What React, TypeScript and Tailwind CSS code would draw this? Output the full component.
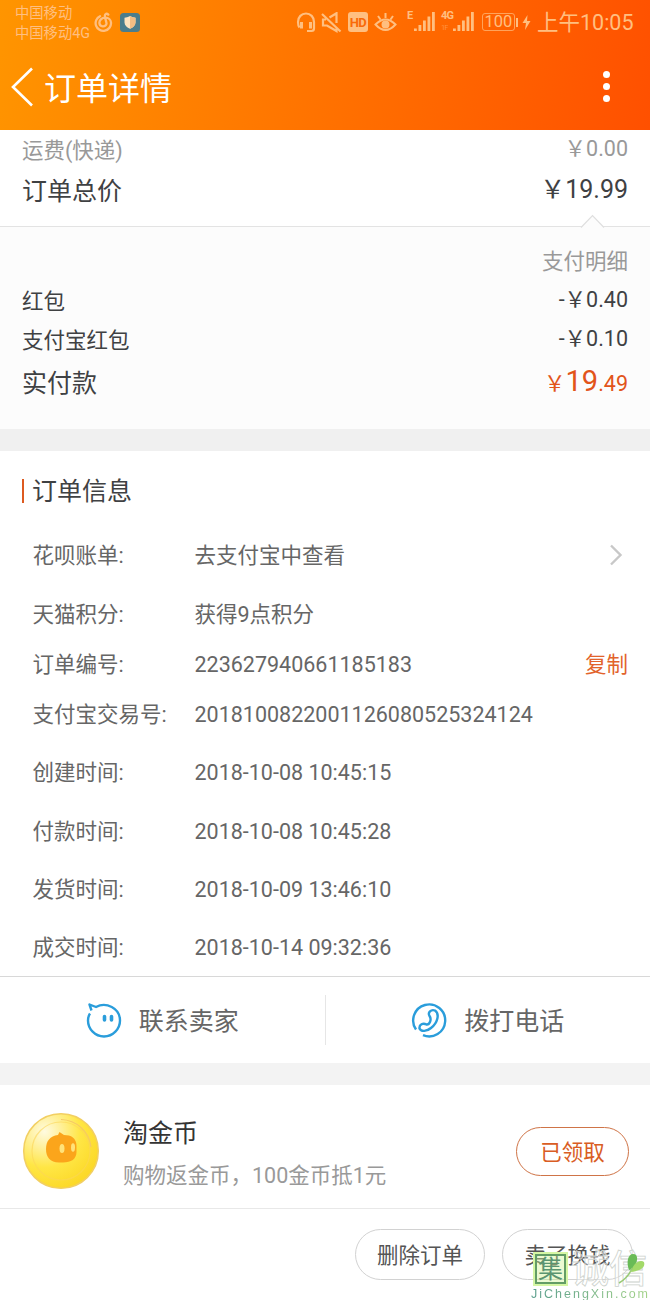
import type { ReactNode } from 'react';
import { clsx } from 'clsx';

const payments = [
  { label: '红包', amount: '-￥0.40' },
  { label: '支付宝红包', amount: '-￥0.10' },
];

type InfoRow = { label: string; value: string; height: string; action?: 'link' | 'copy' };

const infoRows: InfoRow[] = [
  { label: '花呗账单:', value: '去支付宝中查看', height: 'h-[68px]', action: 'link' },
  { label: '天猫积分:', value: '获得9点积分', height: 'h-[50px]' },
  { label: '订单编号:', value: '223627940661185183', height: 'h-[50px]', action: 'copy' },
  { label: '支付宝交易号:', value: '2018100822001126080525324124', height: 'h-[50px]' },
  { label: '创建时间:', value: '2018-10-08 10:45:15', height: 'h-[67px]' },
  { label: '付款时间:', value: '2018-10-08 10:45:28', height: 'h-[50px]' },
  { label: '发货时间:', value: '2018-10-09 13:46:10', height: 'h-[67px]' },
  { label: '成交时间:', value: '2018-10-14 09:32:36', height: 'h-[49px]' },
];

function Signal() {
  return (
    <svg width="22" height="20" viewBox="0 0 22 20" fill="currentColor">
      <rect x="0" y="16.5" width="2.8" height="2.5" />
      <rect x="4.5" y="13" width="2.8" height="6" />
      <rect x="9" y="8.5" width="2.8" height="10.5" />
      <rect x="13.500" y="4.5" width="2.8" height="14.5" />
      <rect x="18" y="0" width="2.8" height="19" />
    </svg>
  );
}

function StatusBar() {
  return (
    <div className="flex h-11 text-[#ffbf80]">
      <div className="w-[78px] pl-[15px] pt-[3px] text-[14.3px] leading-5 whitespace-nowrap">
        <div>中国移动</div>
        <div>中国移动4G</div>
      </div>
      {/* music app */}
      <svg className="ml-4 mt-3" width="20" height="21" viewBox="0 0 20 21" fill="none" stroke="currentColor" strokeWidth="2.300" strokeLinecap="round">
        <path d="M6 4.200A7.700 7.700 0 1 0 17 10.500C16.800 7.600 14.500 5.700 11.500 5.700C7.500 5.700 5.200 8.400 5.400 11.200C5.700 15 11.500 15.500 12.500 11.800C12.700 10.500 10.800 5.500 10.800 4C10.800 1.600 12.800 1.200 14.300 2.600" />
      </svg>
      {/* security app */}
      <svg className="ml-[6px] mt-3" width="20" height="21" viewBox="0 0 20 21">
        <rect y="1" width="20" height="19" rx="3.500" fill="#4b7d8c" />
        <path d="M10 4C8 5.300 6 5.500 4.500 5.700V10.500C4.500 13.500 7 15.500 10 16.800C13 15.500 15.500 13.500 15.500 10.500V5.700C14 5.500 12 5.300 10 4Z" fill="#ffe3be" />
        <path d="M10 4V16.800C13 15.500 15.500 13.500 15.500 10.500V5.700C14 5.500 12 5.300 10 4Z" fill="#f3bd83" />
      </svg>

      {/* headset */}
      <svg className="ml-[156px] mt-3" width="20" height="21" viewBox="0 0 20 21" fill="none" stroke="currentColor" strokeWidth="2.200">
        <path d="M3.500 15.500Q2 14 2 10C2 5 5.500 1.500 10 1.500S18 5 18 10V16.500Q18 19 15.500 19H11" />
        <path d="M5.500 10V16.500M14.500 10V16.500" strokeWidth="3" />
      </svg>
      {/* muted speaker */}
      <svg className="ml-[5px] mt-3" width="21" height="21" viewBox="0 0 21 21" fill="none" stroke="currentColor" strokeWidth="2.200">
        <path d="M1 2L19.500 19.500M8.500 5.500L15.500 1.200V11M5 7.500H2V13.500H6L15.500 19V16.500" />
      </svg>
      <div className="ml-[6px] mt-3 flex h-5 w-5 items-center justify-center rounded-[3px] bg-[#ffbf80] text-[13px] leading-none font-bold tracking-[-0.5px] text-[#f96a08]">
        HD
      </div>
      {/* eye comfort */}
      <svg className="ml-[6px] mt-3" width="23" height="21" viewBox="0 0 22 21" fill="none" stroke="currentColor" strokeWidth="2">
        <path d="M1 12.500Q11 2.500 21 12.500Q11 23.500 1 12.500ZM11 1V6M3.500 4L6 7.500M18.500 4L16 7.500" />
        <circle cx="11" cy="12.500" r="3" fill="currentColor" />
      </svg>
      <div className="ml-[10px] mt-[11px] flex">
        <span className="w-[7px] text-[11px] leading-[10px] font-bold">E</span>
        <span className="pt-[1px]"><Signal /></span>
      </div>
      <div className="ml-[5px] mt-[11px] flex">
        <span className="w-3 text-[11px] leading-[10px] font-bold tracking-[-0.7px]">
          4G
          <span className="block pt-1 text-[7px] leading-[6px] font-normal opacity-50">1F</span>
        </span>
        <span className="pt-[1px]"><Signal /></span>
      </div>
      <div className="ml-[7px] mt-[13px] flex h-[18px] w-[33px] items-center justify-center rounded-[3px] border border-current/70 text-[16.5px] leading-none">
        100
      </div>
      <div className="ml-[1px] mt-[18px] h-[9px] w-[2px] bg-current" />
      <svg className="ml-1 mt-[15px]" width="9" height="15" viewBox="0 0 9 15" fill="currentColor">
        <path d="M5.500 0L0.500 8H4L3 15L8.500 6H5Z" />
      </svg>
      <div className="ml-[6px] pt-[11px] text-[21.5px] leading-6 whitespace-nowrap">上午10:05</div>
    </div>
  );
}

function TitleBar() {
  return (
    <div className="flex h-[86px] items-center pl-[11px] text-white">
      <svg width="24" height="40" viewBox="0 0 24 40" fill="none" stroke="currentColor" strokeWidth="2.600">
        <path d="M21 1.500L2 20L21 38.500" />
      </svg>
      <h1 className="ml-[9px] pt-[3px] text-[32px] leading-10">订单详情</h1>
      <div className="mr-10 ml-auto flex flex-col gap-[5px] pb-[1px]">
        <span className="h-[7px] w-[7px] rounded-full bg-white" />
        <span className="h-[7px] w-[7px] rounded-full bg-white" />
        <span className="h-[7px] w-[7px] rounded-full bg-white" />
      </div>
    </div>
  );
}

function PriceRow({ label, children, className }: { label: string; children: ReactNode; className?: string }) {
  return (
    <div className={clsx('flex items-center justify-between px-[22px]', className)}>
      <span>{label}</span>
      <span className="-translate-y-[2px]">{children}</span>
    </div>
  );
}

function PillButton({ children, className }: { children: ReactNode; className: string }) {
  return (
    <button type="button" className={clsx('flex items-center justify-center rounded-full border text-[21.5px]', className)}>
      {children}
    </button>
  );
}

function Coin() {
  return (
    <svg className="-translate-y-[1px]" width="78" height="78" viewBox="0 0 78 78">
      <defs>
        <radialGradient id="coin" cx="0.28" cy="0.24" r="0.8">
          <stop offset="0" stopColor="#fffbe0" />
          <stop offset="0.28" stopColor="#fff09a" />
          <stop offset="0.6" stopColor="#ffe645" />
          <stop offset="1" stopColor="#fcd928" />
        </radialGradient>
      </defs>
      <circle cx="39" cy="39" r="37.300" fill="url(#coin)" stroke="#f2cf62" strokeWidth="1.500" />
      <circle cx="39" cy="39" r="29" fill="none" stroke="#fbd657" strokeWidth="1.200" opacity="0.600" />
      <path d="M39 7.500A31 31 0 0 1 69 35" fill="none" stroke="#f5c866" strokeWidth="1.200" />
      <path d="M37.500 20L42 23C49 23 54.500 26 54.500 34V40C54.500 47 49 50.500 41 50.500H37C28 50.500 24 45 24 37C24 29 28 24 36 23Z" fill="#fba51b" />
      <ellipse cx="40" cy="36.500" rx="2.500" ry="4.500" fill="#ffe27a" />
      <ellipse cx="51" cy="35.500" rx="2" ry="4.200" fill="#ffe27a" />
    </svg>
  );
}

function Watermark() {
  return (
    <div className="pointer-events-none absolute top-[1252px] left-[530px] h-12 w-[120px]">
      <div className="absolute top-[2px] left-[5px] flex h-[30px] w-[31px] items-center justify-center border-2 border-[#639d66] bg-[#cdf28f]/40 text-[25px] leading-none text-[#5b9571] ring-2 ring-[#d5f6a4]">
        集
      </div>
      <div className="absolute top-0 left-[41px] text-[38px] leading-[34px] font-medium whitespace-nowrap text-white/40 [-webkit-text-stroke:0.8px_#ced3ce]">
        诚信
      </div>
      <svg className="absolute top-0 left-[86px]" width="32" height="36" viewBox="0 0 32 36">
        <path d="M13 18C10 10 12 2 17 2C23 2 22 10 17 17Z" fill="#69bb56" />
        <path d="M15 20C17 11 24 7 28 10C30 16 23 19 15 20Z" fill="#a3d969" />
        <path d="M16 16Q13 25 3 31" fill="none" stroke="#99ca76" strokeWidth="1.500" />
      </svg>
      <div className="absolute top-[36px] left-[1px] bg-linear-to-r from-[#579c8a] to-[#a5d489] bg-clip-text font-['Liberation_Sans'] text-[12.5px] leading-[13px] tracking-[2px] whitespace-nowrap text-transparent">
        JiChengXin.com
      </div>
    </div>
  );
}

export default function App() {
  return (
    <div className="relative h-[1300px] w-[650px] overflow-hidden bg-white font-[Roboto,'Noto_Sans_CJK_SC',sans-serif] text-[21.5px] text-[#3f4143]">
      <header className="h-[130px] bg-linear-[100deg] from-[#ff9500] to-[#ff5000]">
        <StatusBar />
        <TitleBar />
      </header>

      <section className="h-24 pt-[1px]">
        <PriceRow label="运费(快递)" className="h-10 text-[#999]">￥0.00</PriceRow>
        <PriceRow label="订单总价" className="h-[41px] text-[25px]">￥19.99</PriceRow>
      </section>

      {/* payment detail */}
      <section className="relative h-[203px] border-t border-[#e3e3e3] bg-[#fcfcfc]">
        <svg className="absolute -top-[13px] left-[580px]" width="25" height="14" viewBox="0 0 25 14">
          <path d="M1 13.500L12.500 1.500L24 13.500" fill="#fcfcfc" stroke="#dfdfdf" strokeWidth="1.200" />
        </svg>
        <div className="flex h-14 items-end justify-end px-[22px] leading-[42px] text-[#999]">支付明细</div>
        {payments.map((p) => (
          <PriceRow key={p.label} label={p.label} className="h-[39px]">{p.amount}</PriceRow>
        ))}
        <div className="flex h-[46px] items-center justify-between px-[22px] text-[25px]">
          <span>实付款</span>
          <span className="-translate-y-[2px] text-[21.5px] text-[#e2541a]">
            ￥<span className="text-[29px]">19</span>.49
          </span>
        </div>
      </section>
      <div className="h-[22px] bg-[#f0f0f0]" />

      {/* order info */}
      <section className="h-[525px] pt-5">
        <div className="flex h-10 items-center pl-[22px]">
          <span className="h-6 w-[2px] bg-[#dd5a20]" />
          <h2 className="pt-[2px] pl-[8px] text-[25px]">订单信息</h2>
        </div>
        <div className="pt-[11px] text-[#666]">
          {infoRows.map((row) => (
            <div key={row.label} className={clsx('flex items-center pr-[22px] pl-[32.5px]', row.height)}>
              <span className="w-[162px] whitespace-nowrap">{row.label}</span>
              <span className="flex-1">{row.value}</span>
              {row.action === 'link' && (
                <svg className="mr-[5px] -translate-y-[1px]" width="14" height="22" viewBox="0 0 14 22" fill="none" stroke="#c8c8c8" strokeWidth="2.400">
                  <path d="M2 1.500L11.500 11L2 20.500" />
                </svg>
              )}
              {row.action === 'copy' && <button type="button" className="text-[#e2632b]">复制</button>}
            </div>
          ))}
        </div>
      </section>

      {/* contact */}
      <section className="flex h-[87px] items-center border-t border-[#d8d8d8] text-[25px] text-[#666]">
        <div className="flex h-[50px] flex-1 items-center justify-center border-r border-[#e6e6e6]">
          <svg width="36" height="36" viewBox="0 0 36 36" fill="none" stroke="#2a9ddb" strokeWidth="2.400" strokeLinejoin="round">
            <path d="M5.500 8.500L3.500 2.500L10 5C20 -0.500 34 6 34 18.500C34 27 27 34.500 18 34.500S2 27 2 18.500Q2 14.500 4 11.500" />
            <path d="M18.500 14.500V18M25.500 14.500V18" strokeWidth="3.600" strokeLinecap="round" />
          </svg>
          <span className="ml-[17px] pt-1">联系卖家</span>
        </div>
        <div className="flex h-[50px] flex-1 items-center justify-center">
          <svg width="36" height="36" viewBox="0 0 36 36" fill="none" stroke="#2a9ddb" strokeWidth="2.400">
            <path d="M5 27.500A16 16 0 1 1 12 33.200" />
            <path d="M18.500 14C16.500 10.500 20 7 24 8.500C29 12 26.500 21 20 26C16 29.500 10 30 8.500 26.500C8 22.500 12 20.500 15.500 22.500C18.500 23 21 17.500 18.500 14Z" />
          </svg>
          <span className="ml-[17px] pt-1">拨打电话</span>
        </div>
      </section>
      <div className="h-[22px] bg-[#f3f3f3]" />

      <section className="flex h-[123px] items-center pt-[10px] pr-[21px] pl-[22px]">
        <Coin />
        <div className="ml-[23px] flex-1 pt-[7px]">
          <div className="text-[25px] leading-[42px] text-[#333]">淘金币</div>
          <div className="leading-[42px] text-[#999]">购物返金币，100金币抵1元</div>
        </div>
        <PillButton className="h-[49px] w-[113px] border-[#cf7447] pt-1 text-[#d95d24]">已领取</PillButton>
      </section>

      <footer className="flex h-[92px] justify-end gap-[17px] border-t border-[#e8e8e8] pt-5 pr-[17px]">
        <PillButton className="h-[51px] w-[130px] border-[#d2d2d2] pt-[3px] text-[#555]">删除订单</PillButton>
        <PillButton className="h-[51px] w-[131px] border-[#d2d2d2] pt-[3px] text-[#555]">卖了换钱</PillButton>
      </footer>

      <Watermark />
    </div>
  );
}
